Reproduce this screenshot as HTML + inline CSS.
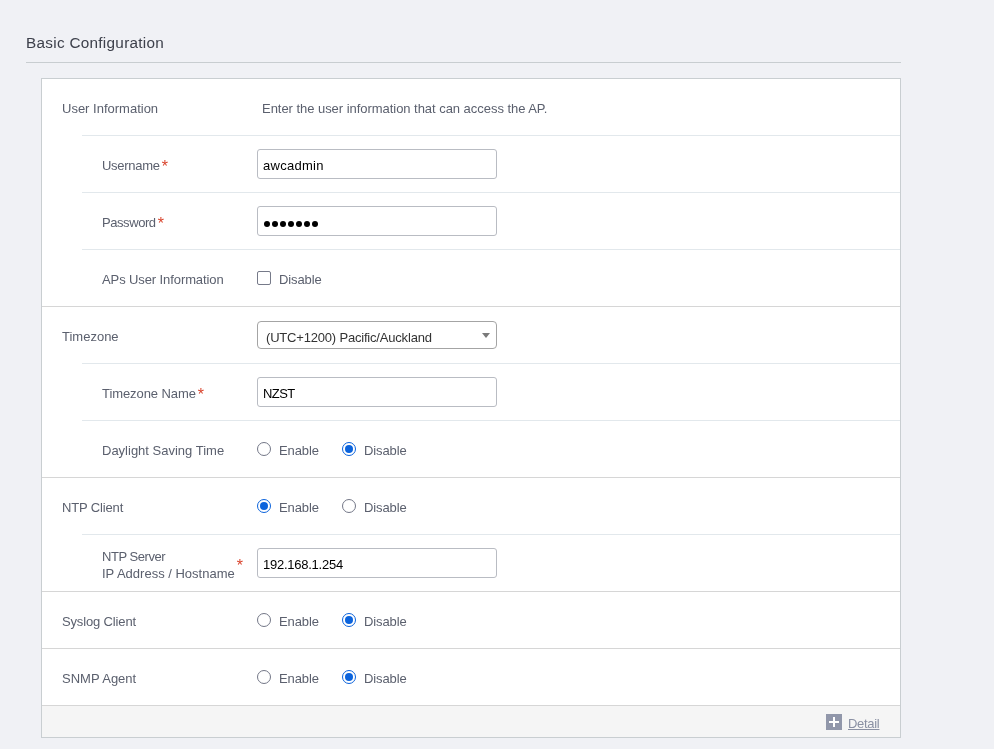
<!DOCTYPE html>
<html><head><meta charset="utf-8">
<style>
*{box-sizing:border-box;margin:0;padding:0}
html,body{width:994px;height:749px;overflow:hidden}
body{background:#f0f1f5;font-family:"Liberation Sans",sans-serif;position:relative;color:#5b606e}
.title{will-change:transform;position:absolute;left:26px;top:34px;font-size:15.3px;letter-spacing:0.29px;line-height:18px;color:#3d404b;white-space:nowrap}
.hr{position:absolute;left:26px;top:62px;width:875px;height:1px;background:#c8cdd0}
.box{will-change:transform;position:absolute;left:41px;top:78px;width:860px;height:660px;border:1px solid #c9ced1;background:#fff}
.row{position:absolute;left:0;width:858px;height:57px}
.row.bf{border-bottom:1px solid #d6d6d6}
.row.bs::after{content:"";position:absolute;left:40px;right:0;bottom:0;height:1px;background:#e2e8ec}
.lbl{position:absolute;left:60px;top:22px;font-size:13px;line-height:16px;white-space:nowrap;color:#5b606e}
.req{position:relative;display:inline-block;width:8px;height:1px}
.req::after{content:"*";position:absolute;left:2px;top:-10px;font-size:16px;line-height:16px;color:#d9432c}
.desc{position:absolute;left:220px;top:22px;font-size:13px;line-height:16px;white-space:nowrap;color:#5b606e}
.inp{position:absolute;left:215px;top:13px;width:240px;height:30px;border:1px solid #b9bcc3;border-radius:3px;background:#fff;font-size:13px;line-height:16px;color:#000;padding:8px 0 0 5px;white-space:nowrap}
.dot{position:absolute;top:14px;width:6px;height:6px;border-radius:50%;background:#000}
.sel{position:absolute;left:215px;top:14px;width:240px;height:28px;border:1px solid #a4a4a4;border-radius:4px;background:#fff;font-size:13px;line-height:16px;color:#333;padding:8px 0 0 8px;white-space:nowrap}
.sel .arr{position:absolute;right:6px;top:11px;width:0;height:0;border-left:4px solid transparent;border-right:4px solid transparent;border-top:5px solid #7a7a7a}
.ctl{position:absolute;left:215px;top:0;height:56px}
.cb{position:absolute;top:21px;width:14px;height:14px;border:1px solid #767a89;border-radius:2px;background:#fff}
.rd{position:absolute;top:21px;width:14px;height:14px;border:1px solid #737787;border-radius:50%;background:#fff}
.rd.on{border-color:#0b63dc}
.rd.on::after{content:"";position:absolute;left:2px;top:2px;width:8px;height:8px;border-radius:50%;background:#0b63dc}
.opt{position:absolute;top:22px;letter-spacing:-0.1px;font-size:13px;line-height:16px;white-space:nowrap;color:#5b606e}
.foot{position:absolute;left:0;top:627px;width:858px;height:31px;background:#f5f5f5}
.plus{position:absolute;left:784px;top:8px;width:16px;height:16px;background:#9197aa}
.plus::before{content:"";position:absolute;left:2.75px;top:6.75px;width:10.5px;height:2.5px;background:#fff}
.plus::after{content:"";position:absolute;left:6.75px;top:2.75px;width:2.5px;height:10.5px;background:#fff}
.detail{position:absolute;left:806px;top:10px;font-size:13px;line-height:16px;color:#8a90a3;letter-spacing:-0.3px;text-decoration:underline;white-space:nowrap}
</style></head><body>
<div class="title">Basic Configuration</div>
<div class="hr"></div>
<div class="box">
  <div class="row bs" style="top:0"><div class="lbl" style="left:20px">User Information</div><div class="desc" style="letter-spacing:-0.04px">Enter the user information that can access the AP.</div></div>
  <div class="row bs" style="top:57px"><div class="lbl" style="letter-spacing:-0.28px">Username<span class="req"></span></div><div class="inp" style="letter-spacing:0.28px">awcadmin</div></div>
  <div class="row bs" style="top:114px"><div class="lbl" style="letter-spacing:-0.43px">Password<span class="req"></span></div><div class="inp"><i class="dot" style="left:6px"></i><i class="dot" style="left:14px"></i><i class="dot" style="left:22px"></i><i class="dot" style="left:30px"></i><i class="dot" style="left:38px"></i><i class="dot" style="left:46px"></i><i class="dot" style="left:54px"></i></div></div>
  <div class="row bf" style="top:171px"><div class="lbl" style="letter-spacing:-0.1px">APs User Information</div><div class="ctl"><div class="cb" style="left:0"></div><div class="opt" style="left:22px">Disable</div></div></div>
  <div class="row bs" style="top:228px"><div class="lbl" style="left:20px">Timezone</div><div class="sel"><span style="letter-spacing:-0.19px">(UTC+1200) Pacific/Auckland</span><div class="arr"></div></div></div>
  <div class="row bs" style="top:285px"><div class="lbl" style="letter-spacing:-0.08px">Timezone Name<span class="req"></span></div><div class="inp" style="letter-spacing:-0.6px">NZST</div></div>
  <div class="row bf" style="top:342px"><div class="lbl">Daylight Saving Time</div><div class="ctl"><div class="rd" style="left:0"></div><div class="opt" style="left:22px">Enable</div><div class="rd on" style="left:85px"></div><div class="opt" style="left:107px">Disable</div></div></div>
  <div class="row bs" style="top:399px"><div class="lbl" style="left:20px;letter-spacing:-0.15px">NTP Client</div><div class="ctl"><div class="rd on" style="left:0"></div><div class="opt" style="left:22px">Enable</div><div class="rd" style="left:85px"></div><div class="opt" style="left:107px">Disable</div></div></div>
  <div class="row bf" style="top:456px"><div class="lbl" style="top:13px;line-height:17px"><span style="letter-spacing:-0.45px">NTP Server</span><br>IP Address / Hostname<span class="req" style="position:absolute;top:20px"></span></div><div class="inp" style="letter-spacing:-0.25px">192.168.1.254</div></div>
  <div class="row bf" style="top:513px"><div class="lbl" style="left:20px;letter-spacing:-0.15px">Syslog Client</div><div class="ctl"><div class="rd" style="left:0"></div><div class="opt" style="left:22px">Enable</div><div class="rd on" style="left:85px"></div><div class="opt" style="left:107px">Disable</div></div></div>
  <div class="row bf" style="top:570px"><div class="lbl" style="left:20px">SNMP Agent</div><div class="ctl"><div class="rd" style="left:0"></div><div class="opt" style="left:22px">Enable</div><div class="rd on" style="left:85px"></div><div class="opt" style="left:107px">Disable</div></div></div>
  <div class="foot"><div class="plus"></div><div class="detail">Detail</div></div>
</div>
</body></html>
